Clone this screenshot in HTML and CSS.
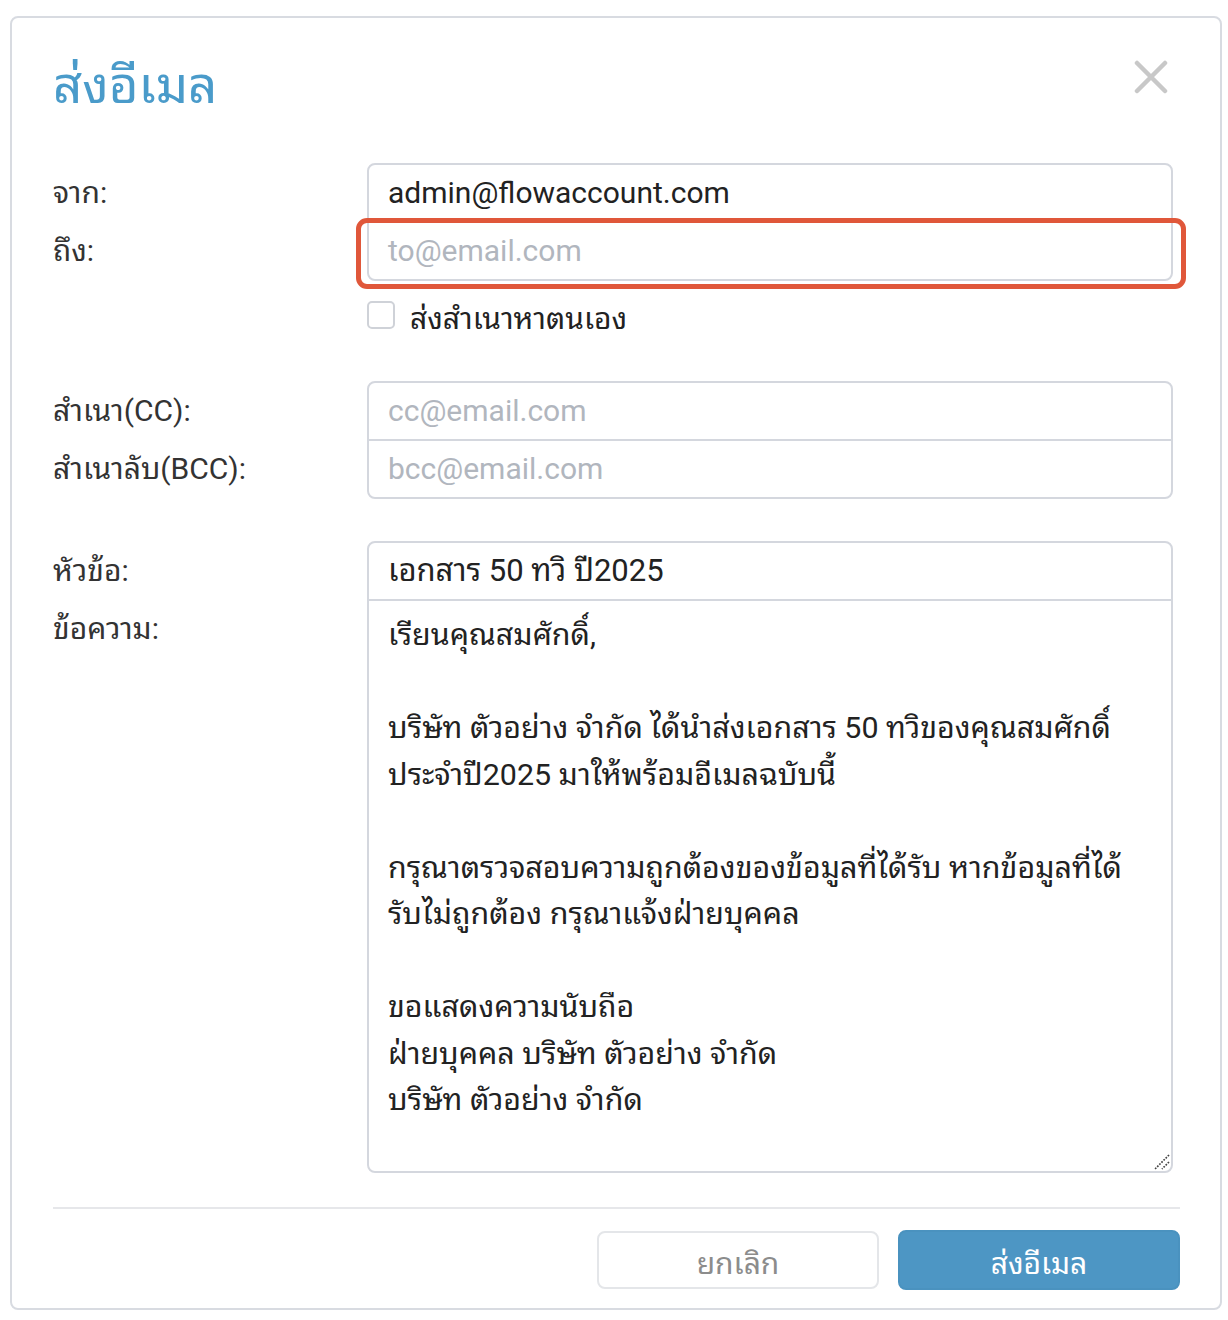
FILE: index.html
```html
<!DOCTYPE html>
<html lang="th">
<head>
<meta charset="utf-8">
<title>ส่งอีเมล</title>
<link rel="stylesheet" href="styles.css">
</head>
<body>
<div class="modal">
  <div class="modal-header">
    <h1 class="title">ส่งอีเมล</h1>
    <button class="close" aria-label="close">
      <svg width="34" height="34" viewBox="0 0 34 34"><path d="M3 3 L31 31 M31 3 L3 31" stroke="#c8c8c8" stroke-width="4.5" stroke-linecap="round"/></svg>
    </button>
  </div>

  <div class="row">
    <div class="labels">
      <div class="label">จาก:</div>
      <div class="label">ถึง:</div>
    </div>
    <div class="group-wrap">
      <div class="group">
        <div class="field value">admin@flowaccount.com</div>
        <div class="field placeholder">to@email.com</div>
      </div>
      <div class="highlight"></div>
    </div>
  </div>

  <div class="row check-row">
    <div></div>
    <label class="check"><span class="box"></span><span>ส่งสำเนาหาตนเอง</span></label>
  </div>

  <div class="row cc-row">
    <div class="labels">
      <div class="label">สำเนา(CC):</div>
      <div class="label">สำเนาลับ(BCC):</div>
    </div>
    <div class="group">
      <div class="field placeholder">cc@email.com</div>
      <div class="field placeholder">bcc@email.com</div>
    </div>
  </div>

  <div class="row subject-row">
    <div class="labels">
      <div class="label">หัวข้อ:</div>
      <div class="label">ข้อความ:</div>
    </div>
    <div class="group">
      <div class="field value thai">เอกสาร 50 ทวิ ปี2025</div>
      <div class="message">
        <p>เรียนคุณสมศักดิ์,</p>
        <p>บริษัท ตัวอย่าง จำกัด ได้นำส่งเอกสาร 50 ทวิของคุณสมศักดิ์<br>ประจำปี2025 มาให้พร้อมอีเมลฉบับนี้</p>
        <p>กรุณาตรวจสอบความถูกต้องของข้อมูลที่ได้รับ หากข้อมูลที่ได้<br>รับไม่ถูกต้อง กรุณาแจ้งฝ่ายบุคคล</p>
        <p>ขอแสดงความนับถือ<br>ฝ่ายบุคคล บริษัท ตัวอย่าง จำกัด<br>บริษัท ตัวอย่าง จำกัด</p>
        <svg class="grip" width="16" height="16" viewBox="0 0 16 16"><path d="M15 1 L1 15 M15 8 L8 15" stroke="#444" stroke-width="1.7" stroke-dasharray="1.7 1.3"/></svg>
      </div>
    </div>
  </div>

  <div class="footer">
    <button class="btn btn-cancel">ยกเลิก</button>
    <button class="btn btn-send">ส่งอีเมล</button>
  </div>
</div>
</body>
</html>
```

FILE: styles.css
```css
* { box-sizing: border-box; }
html, body { margin: 0; padding: 0; background: #ffffff; }
body {
  font-family: Roboto, "Noto Sans Thai Looped", "Loma", "Garuda", "Noto Sans Thai", "Noto Sans Thai UI", "Noto Sans", "DejaVu Sans", sans-serif;
  color: #222;
  padding: 16px 0 0 10px;
}
.modal {
  width: 1212px;
  height: 1294px;
  border: 2px solid #d8dbe1;
  border-radius: 8px;
  padding: 0 40px 0 41px;
  background: #fff;
}
.modal-header {
  display: flex;
  justify-content: space-between;
  align-items: flex-start;
  height: 145px;
}
.title {
  margin: 38px 0 0 0;
  font-size: 51px;
  font-weight: 400;
  line-height: 60px;
  color: #4a9bca;
}
.close {
  margin: 42px 12px 0 0;
  padding: 0;
  border: 0;
  background: none;
  width: 34px;
  height: 34px;
}
.row {
  display: grid;
  grid-template-columns: 314px 806px;
}
.labels {
  display: flex;
  flex-direction: column;
  gap: 2px;
  padding-top: 2px;
}
.label {
  height: 56px;
  line-height: 56px;
  font-size: 30px;
  color: #333;
  white-space: nowrap;
}
.group-wrap { position: relative; }
.group {
  border: 2px solid #d4d7de;
  border-radius: 8px;
  background: #fff;
  overflow: hidden;
}
.field {
  height: 56px;
  line-height: 56px;
  padding-left: 19px;
  font-size: 30px;
  white-space: nowrap;
}
.field + .field {
  height: 58px;
  border-top: 2px solid #d4d7de;
}
.field.thai { font-size: 31px; }
.value { color: #222; }
.placeholder { color: #b1b6be; }
.highlight {
  position: absolute;
  left: -11px;
  right: -13px;
  top: 55px;
  height: 71px;
  border: 5px solid #e0573a;
  border-radius: 11px;
  pointer-events: none;
}
.check-row { margin-top: 20px; }
.check {
  display: flex;
  align-items: center;
  gap: 15px;
  font-size: 30px;
  color: #222;
  height: 28px;
}
.box {
  width: 28px;
  height: 28px;
  border: 2px solid #cfd2d8;
  border-radius: 5px;
  flex: none;
}
.cc-row { margin-top: 52px; }
.subject-row { margin-top: 42px; }
.message {
  position: relative;
  height: 572px;
  border-top: 2px solid #d4d7de;
  padding: 11px 19px 0 19px;
  font-size: 30.4px;
  line-height: 46.5px;
  color: #222;
  white-space: nowrap;
}
.message p { margin: 0 0 46.5px 0; }
.grip { position: absolute; right: 1px; bottom: 1px; }
.footer {
  margin-top: 34px;
  border-top: 2px solid #e6e7ea;
  padding-top: 21px;
  display: flex;
  justify-content: flex-end;
  gap: 19px;
}
.btn {
  font-family: inherit;
  font-size: 30px;
  width: 282px;
  height: 60px;
  border-radius: 8px;
  cursor: pointer;
}
.btn-cancel {
  background: #fff;
  border: 2px solid #e4e6e9;
  color: #8c8c8c;
  height: 58px;
  margin-top: 1px;
}
.btn-send {
  background: #4d96c4;
  border: 2px solid #4a92bf;
  color: #fff;
}
```
